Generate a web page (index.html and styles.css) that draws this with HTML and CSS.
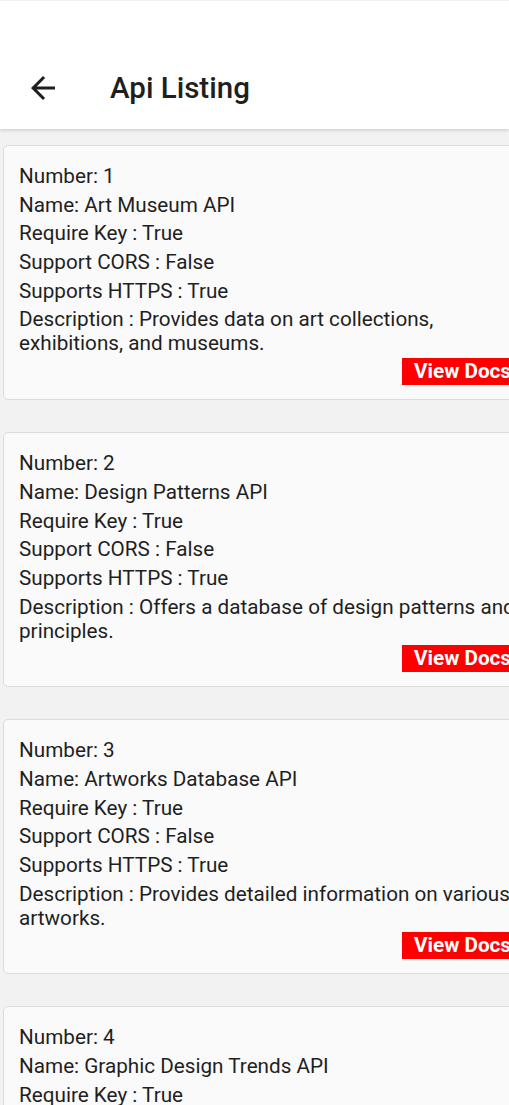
FILE: index.html
```html
<!DOCTYPE html>
<html>
<head>
<meta charset="utf-8">
<link rel="stylesheet" href="styles.css">
</head>
<body>
<div class="screen">
  <header class="appbar">
    <div class="toolbar">
      <svg class="back" viewBox="0 0 24 24" width="36" height="36"><path d="M20 11H7.83l5.59-5.59L12 4l-8 8 8 8 1.41-1.41L7.83 13H20v-2z" fill="#1f1f1f"/></svg>
      <h1 class="title">Api Listing</h1>
    </div>
  </header>
  <main class="list">
    <div class="card">
      <p class="line">Number: 1</p>
      <p class="line">Name: Art Museum API</p>
      <p class="line">Require Key : True</p>
      <p class="line">Support CORS : False</p>
      <p class="line">Supports HTTPS : True</p>
      <p class="line">Description : Provides data on art collections, exhibitions, and museums.</p>
      <div class="actions"><span class="btn">View Docs</span></div>
    </div>
    <div class="card">
      <p class="line">Number: 2</p>
      <p class="line">Name: Design Patterns API</p>
      <p class="line">Require Key : True</p>
      <p class="line">Support CORS : False</p>
      <p class="line">Supports HTTPS : True</p>
      <p class="line">Description : Offers a database of design patterns and principles.</p>
      <div class="actions"><span class="btn">View Docs</span></div>
    </div>
    <div class="card">
      <p class="line">Number: 3</p>
      <p class="line">Name: Artworks Database API</p>
      <p class="line">Require Key : True</p>
      <p class="line">Support CORS : False</p>
      <p class="line">Supports HTTPS : True</p>
      <p class="line">Description : Provides detailed information on various artworks.</p>
      <div class="actions"><span class="btn">View Docs</span></div>
    </div>
    <div class="card">
      <p class="line">Number: 4</p>
      <p class="line">Name: Graphic Design Trends API</p>
      <p class="line">Require Key : True</p>
      <p class="line">Support CORS : False</p>
      <p class="line">Supports HTTPS : True</p>
      <p class="line">Description : Explores the latest trends in graphic design.</p>
      <div class="actions"><span class="btn">View Docs</span></div>
    </div>
  </main>
</div>
</body>
</html>
```
FILE: styles.css
```css
html, body {
  margin: 0;
  padding: 0;
  background: #f2f2f2;
}
body {
  font-family: Roboto, "Noto Sans", sans-serif;
  color: #1f1f1f;
  overflow: hidden;
  width: 509px;
  height: 1105px;
}
.screen {
  width: 509px;
  height: 1105px;
  overflow: hidden;
}
.appbar {
  background: #ffffff;
  height: 129px;
  box-shadow: 0 1px 4px rgba(0, 0, 0, 0.18);
  position: relative;
  z-index: 1;
  display: flex;
  align-items: flex-end;
  border-top: 1px solid #f0f0f0;
  box-sizing: border-box;
}
.toolbar {
  height: 76px;
  display: flex;
  align-items: center;
  padding-left: 25px;
  padding-bottom: 6px;
  box-sizing: border-box;
  width: 100%;
}
.back {
  display: block;
  flex: none;
}
.title {
  margin: 0 0 0 49px;
  font-size: 29.5px;
  font-weight: 500;
  color: #1f1f1f;
}
.list {
  padding: 16px 0 0 3px;
  display: flex;
  flex-direction: column;
  gap: 32px;
}
.card {
  width: 533px;
  flex: none;
  box-sizing: border-box;
  background: #fafafa;
  border: 1px solid #dcdcdc;
  border-radius: 5px;
  padding: 18px 16px 14px 15px;
  display: flex;
  flex-direction: column;
  gap: 4.7px;
}
.line {
  margin: 0;
  font-size: 20.7px;
  line-height: 24px;
}
.actions {
  display: flex;
  justify-content: flex-end;
  margin-top: -2px;
}
.btn {
  background: #ff0000;
  color: #ffffff;
  font-weight: 700;
  font-size: 20.7px;
  line-height: 27px;
  padding: 0 8px 0 12px;
}
```
